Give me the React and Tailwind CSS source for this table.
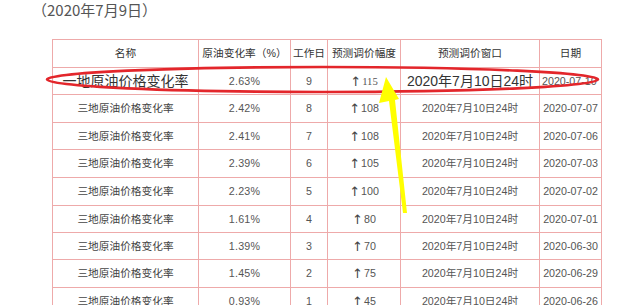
import React from "react";

const rows = [
  { name: "一地原油价格变化率", rate: "2.63%", day: "9", up: "115", win: "2020年7月10日24时", date: "2020-07-10", h: "h-[27px]", big: true },
  { name: "三地原油价格变化率", rate: "2.42%", day: "8", up: "108", win: "2020年7月10日24时", date: "2020-07-07", h: "h-[28px]" },
  { name: "三地原油价格变化率", rate: "2.41%", day: "7", up: "108", win: "2020年7月10日24时", date: "2020-07-06", h: "h-[27px]" },
  { name: "三地原油价格变化率", rate: "2.39%", day: "6", up: "105", win: "2020年7月10日24时", date: "2020-07-03", h: "h-[28px]" },
  { name: "三地原油价格变化率", rate: "2.23%", day: "5", up: "100", win: "2020年7月10日24时", date: "2020-07-02", h: "h-[28px]" },
  { name: "三地原油价格变化率", rate: "1.61%", day: "4", up: "80", win: "2020年7月10日24时", date: "2020-07-01", h: "h-[27px]" },
  { name: "三地原油价格变化率", rate: "1.39%", day: "3", up: "70", win: "2020年7月10日24时", date: "2020-06-30", h: "h-[27px]" },
  { name: "三地原油价格变化率", rate: "1.45%", day: "2", up: "75", win: "2020年7月10日24时", date: "2020-06-29", h: "h-[28px]" },
  { name: "三地原油价格变化率", rate: "0.93%", day: "1", up: "45", win: "2020年7月10日24时", date: "2020-06-26", h: "h-[27px]" },
];

const cell = "flex items-center justify-center border-r border-b border-[#eeaaaa] overflow-hidden whitespace-nowrap";

export default function App() {
  return (
    <div
      className="relative w-[640px] h-[305px] overflow-hidden bg-white text-[#3a3a3a]"
      style={{ fontFamily: '"Liberation Sans", "Noto Sans CJK SC", sans-serif' }}
    >
      <div className="pl-[32px] h-[20px] leading-[20px] text-[15px] text-[#555]" style={{ fontFamily: '"Noto Sans CJK SC", sans-serif' }}>
        （2020年7月9日）
      </div>

      <div className="ml-[52px] mt-[19px] w-[550px] grid grid-cols-[146px_92px_37px_73px_139px_62px] border-l border-t border-[#eeaaaa] text-[10.7px]">
        <div className={`${cell} h-[28px] text-[#333]`}>名称</div>
        <div className={`${cell} h-[28px] text-[#333]`}>原油变化率（%）</div>
        <div className={`${cell} h-[28px] text-[#333]`}>工作日</div>
        <div className={`${cell} h-[28px] text-[#333]`}>预测调价幅度</div>
        <div className={`${cell} h-[28px] text-[#333]`}>预测调价窗口</div>
        <div className={`${cell} h-[28px] text-[#333]`}>日期</div>

        {rows.map((r, i) => (
          <React.Fragment key={i}>
            <div className={`${cell} ${r.h} ${r.big ? "text-[14px] text-[#333]" : "text-[#444]"}`}>{r.name}</div>
            <div className={`${cell} ${r.h} text-[#555] tracking-[0.2px]`}>{r.rate}</div>
            <div className={`${cell} ${r.h} text-[#555]`}>{r.day}</div>
            <div className={`${cell} ${r.h} text-[#555]`}>
              <span className="text-[13px] leading-none mr-[1px] text-[#444]" style={{ fontFamily: '"DejaVu Sans", sans-serif' }}>↑</span>
              <span style={r.big ? { fontFamily: '"Liberation Serif", serif' } : undefined}>{r.up}</span>
            </div>
            <div className={`${cell} ${r.h} ${r.big ? "text-[14px] text-[#333]" : "text-[#555]"}`}>{r.win}</div>
            <div className={`${cell} ${r.h} text-[#555] ${r.big ? "justify-start pl-[2px]" : ""}`}>{r.date}</div>
          </React.Fragment>
        ))}
      </div>

      <svg className="absolute inset-0 pointer-events-none" width="640" height="305" viewBox="0 0 640 305">
        <ellipse cx="322.5" cy="79.5" rx="275.5" ry="12.5" fill="none" stroke="#e3262b" strokeWidth="2.6" />
        <polygon
          points="386,77 399,99 395,100 407,213 403,213 389,101 379,103"
          fill="#ffff00"
        />
      </svg>
    </div>
  );
}
